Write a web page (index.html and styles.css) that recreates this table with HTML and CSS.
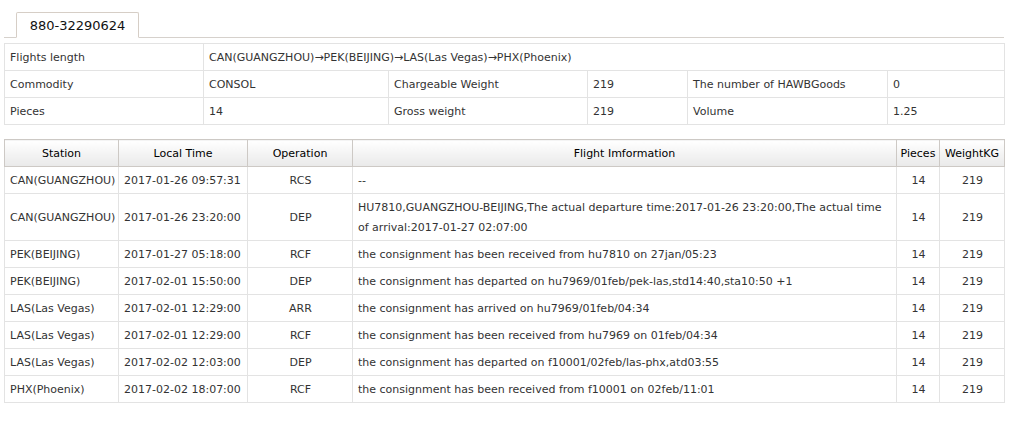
FILE: index.html
```html
<!DOCTYPE html>
<html>
<head>
<meta charset="utf-8">
<link rel="stylesheet" href="styles.css">
</head>
<body>
<div class="page">
  <div class="tabs">
    <div class="tab">880-32290624</div>
  </div>
  <table class="info">
    <colgroup>
      <col style="width:199px"><col style="width:185px"><col style="width:199px"><col style="width:100px"><col style="width:200px"><col style="width:117px">
    </colgroup>
    <tr><td>Flights length</td><td colspan="5">CAN(GUANGZHOU)→PEK(BEIJING)→LAS(Las Vegas)→PHX(Phoenix)</td></tr>
    <tr><td>Commodity</td><td>CONSOL</td><td>Chargeable Weight</td><td>219</td><td>The number of HAWBGoods</td><td>0</td></tr>
    <tr><td>Pieces</td><td>14</td><td>Gross weight</td><td>219</td><td>Volume</td><td>1.25</td></tr>
  </table>
  <table class="track">
    <colgroup>
      <col style="width:114px"><col style="width:129px"><col style="width:105px"><col style="width:544px"><col style="width:43px"><col style="width:65px">
    </colgroup>
    <thead>
      <tr><th>Station</th><th>Local Time</th><th>Operation</th><th>Flight Imformation</th><th>Pieces</th><th>WeightKG</th></tr>
    </thead>
    <tbody>
      <tr><td>CAN(GUANGZHOU)</td><td>2017-01-26 09:57:31</td><td class="c">RCS</td><td>--</td><td class="c">14</td><td class="c">219</td></tr>
      <tr><td>CAN(GUANGZHOU)</td><td>2017-01-26 23:20:00</td><td class="c">DEP</td><td>HU7810,GUANGZHOU-BEIJING,The actual departure time:2017-01-26 23:20:00,The actual time of arrival:2017-01-27 02:07:00</td><td class="c">14</td><td class="c">219</td></tr>
      <tr><td>PEK(BEIJING)</td><td>2017-01-27 05:18:00</td><td class="c">RCF</td><td>the consignment has been received from hu7810 on 27jan/05:23</td><td class="c">14</td><td class="c">219</td></tr>
      <tr><td>PEK(BEIJING)</td><td>2017-02-01 15:50:00</td><td class="c">DEP</td><td>the consignment has departed on hu7969/01feb/pek-las,std14:40,sta10:50 +1</td><td class="c">14</td><td class="c">219</td></tr>
      <tr><td>LAS(Las Vegas)</td><td>2017-02-01 12:29:00</td><td class="c">ARR</td><td>the consignment has arrived on hu7969/01feb/04:34</td><td class="c">14</td><td class="c">219</td></tr>
      <tr><td>LAS(Las Vegas)</td><td>2017-02-01 12:29:00</td><td class="c">RCF</td><td>the consignment has been received from hu7969 on 01feb/04:34</td><td class="c">14</td><td class="c">219</td></tr>
      <tr><td>LAS(Las Vegas)</td><td>2017-02-02 12:03:00</td><td class="c">DEP</td><td>the consignment has departed on f10001/02feb/las-phx,atd03:55</td><td class="c">14</td><td class="c">219</td></tr>
      <tr><td>PHX(Phoenix)</td><td>2017-02-02 18:07:00</td><td class="c">RCF</td><td>the consignment has been received from f10001 on 02feb/11:01</td><td class="c">14</td><td class="c">219</td></tr>
    </tbody>
  </table>
</div>
</body>
</html>
```
FILE: styles.css
```css
html, body {
  margin: 0;
  padding: 0;
  background: #fff;
}
body {
  font-family: "DejaVu Sans", Verdana, sans-serif;
  font-size: 11px;
  color: #333;
}
.page {
  padding: 12px 0 0 4px;
  width: 1000px;
}
.tabs {
  display: flex;
  padding-left: 12px;
  border-bottom: 1px solid #d6d1cc;
  height: 25px;
}
.tab {
  box-sizing: border-box;
  width: 123px;
  height: 26px;
  padding-top: 1px;
  border: 1px solid #d6cec6;
  border-bottom: 1px solid #fff;
  border-radius: 2px 2px 0 0;
  background: #fff;
  color: #111;
  font-size: 13px;
  line-height: 23px;
  text-align: center;
}
table {
  border-collapse: collapse;
  table-layout: fixed;
  width: 1000px;
}
td, th {
  border: 1px solid #e3e3e3;
  padding: 4px 4px 2px 5px;
  line-height: 20px;
  text-align: left;
  font-weight: normal;
  vertical-align: middle;
}
.info {
  margin-top: 5px;
}
.track {
  margin-top: 14px;
}
.track th {
  background: linear-gradient(#ffffff, #e9e9e9);
  border: 1px solid #cdc9c5;
  color: #000;
  text-align: center;
  padding: 4px 2px 2px;
}
.track td.c {
  text-align: center;
}
```
